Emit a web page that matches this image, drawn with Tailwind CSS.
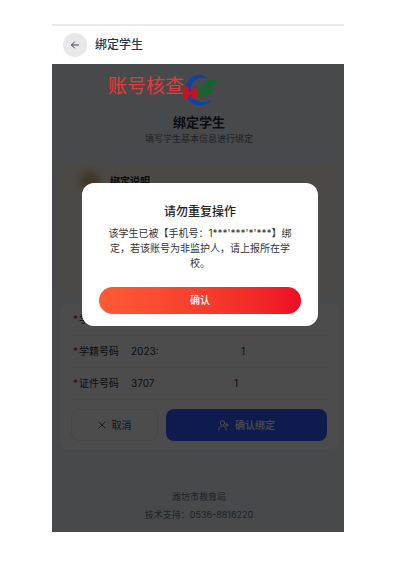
<!DOCTYPE html>
<html lang="zh-CN">
<head>
  <meta charset="UTF-8">
  <meta name="viewport" content="width=device-width, initial-scale=1.0">
  <title>绑定学生</title>
  <script src="https://cdn.jsdelivr.net/npm/@tailwindcss/browser@4"></script>
</head>
<body class="bg-white pt-6 pr-[70px] pb-[39px] pl-[52px] font-['Inter','Noto_Sans_CJK_SC',sans-serif] text-[10px] text-[#303133]">

  <header class="flex h-10 items-center gap-2 border-t-2 border-[#ebebeb] bg-white px-[11px]">
    <button type="button" aria-label="返回" class="flex size-6 items-center justify-center rounded-full bg-[#e8e8e8]">
      <svg class="size-[10px]" viewBox="0 0 10 10" fill="none" stroke="#384454" stroke-width="1" stroke-linecap="round" stroke-linejoin="round"><path d="M8.500 5H1.500M4.500 2L1.500 5l3 3"/></svg>
    </button>
    <h1 class="text-[12px] leading-5 font-medium text-[#28364a]">绑定学生</h1>
  </header>

  <main class="relative bg-[#f1f5f9] pt-[11px] pr-[6px] pb-2 pl-2">

    <section class="flex flex-col items-center">
      <!-- logo -->
      <svg class="relative z-10 h-[31px] w-[34px]" viewBox="0 0 34 31">
        <path d="M26.500 4C22 -1 14-1.500 9 3C3 8 2 16 5 22C9.500 31.500 22 34 30 24.500C24 28.500 15 28.500 11 22C7 15 8.500 7.500 14.500 4.200C18 2.300 22 2.300 26.500 4Z" fill="#0d42ab"/>
        <path d="M.5 12.500L6.500 11L7 17.500L13 11L13.500 17.500L20.500 10L14.500 23.500L9.500 23.500L9.500 18.500L5 24L1.500 24Z" fill="#c4141d"/>
        <path d="M15.500 21C16 13 22 5.500 34.500 4C33.500 9.500 30 12 24.500 13C21 14 18 17 15.500 21Z" fill="#0c6b2c"/>
        <path d="M15 24.500C18 17.500 22 14 32 13.500C28.500 18.500 25 20 21 20.300C18.500 20.800 16.500 22.500 15 24.500Z" fill="#0c6b2c"/>
      </svg>
      <h2 class="mt-[6px] text-[13px] leading-5 font-bold text-[#1e293b]">绑定学生</h2>
      <p class="text-[9px] leading-[14px] text-[#64748b]">填写学生基本信息进行绑定</p>
    </section>

    <section class="mt-[17px] h-[131px] rounded-lg bg-[#faf5ea] px-5 py-2">
      <div class="flex items-center gap-[10px]">
        <span class="size-5 rounded-full bg-[#d8b078] blur-xs"></span>
        <h3 class="leading-5 font-bold text-[#1e293b]">绑定说明</h3>
      </div>
    </section>

    <form class="mt-[10px] rounded-lg bg-white px-[11px] pb-2">
      <div class="flex h-8 items-center border-b border-[#f3f3f3] pl-[2px]">
        <span class="w-[6px] text-[#e5002d]">*</span>
        <label for="name" class="w-[52px]">学生姓名</label>
        <input id="name" type="text" class="w-[110px] outline-none">
      </div>
      <div class="flex h-8 items-center border-b border-[#f3f3f3] pl-[2px]">
        <span class="w-[6px] text-[#e5002d]">*</span>
        <label for="studentNo" class="w-[52px]">学籍号码</label>
        <input id="studentNo" type="text" value="2023:" class="w-[110px] outline-none">
        <span>1</span>
      </div>
      <div class="flex h-8 items-center border-b border-[#f3f3f3] pl-[2px]">
        <span class="w-[6px] text-[#e5002d]">*</span>
        <label for="idNo" class="w-[52px]">证件号码</label>
        <input id="idNo" type="text" value="3707" class="w-[103px] outline-none">
        <span>1</span>
      </div>
      <div class="mt-[9px] flex gap-2">
        <button type="button" class="flex h-8 w-[87px] items-center justify-center gap-[6px] rounded-lg border border-[#e9eef5] text-[#475569]">
          <svg class="size-2" viewBox="0 0 8 8" stroke="currentColor" stroke-width="1" stroke-linecap="round"><path d="M1 1l6 6M7 1L1 7"/></svg>
          取消
        </button>
        <button type="submit" class="flex h-8 flex-1 items-center justify-center gap-[6px] rounded-lg bg-[#305aff] font-medium text-white">
          <svg class="size-[11px]" viewBox="0 0 11 11" fill="none" stroke="currentColor" stroke-width="1" stroke-linecap="round" stroke-linejoin="round"><circle cx="4.500" cy="3" r="2.200"/><path d="M.6 10C.8 7.500 2.300 6 4.500 6S8 7.500 8.300 10M7.200 5h3.200M8.800 3.400v3.200"/></svg>
          确认绑定
        </button>
      </div>
    </form>

    <footer class="mt-[39px] text-center text-[9px] leading-[18px] text-[#64748b]">
      <p>潍坊市教育局</p>
      <p>技术支持：0536-8816220</p>
    </footer>

    <!-- mask and dialog -->
    <div class="absolute inset-0 bg-black/70"></div>
    <p class="absolute top-[9px] left-14 z-20 text-[19px] leading-7 text-[#e53b3b]">账号核查</p>
    <div class="absolute inset-0 z-20 pt-[119px] pr-[26px] pl-[30px]">
      <div role="dialog" aria-labelledby="dialogTitle" class="rounded-xl bg-white px-[17px] pt-[19px] pb-3 text-center">
        <h2 id="dialogTitle" class="text-[12px] leading-5 font-medium text-[#222222]">请勿重复操作</h2>
        <p class="mt-1 leading-[15px] whitespace-nowrap text-[#333333]">该学生已被【手机号：1***'***'*'***】绑<br>定，若该账号为非监护人，请上报所在学<br>校。</p>
        <button type="button" class="mt-4 h-[27px] w-full rounded-full bg-linear-to-r from-[#ff5a36] to-[#ee0a24] font-medium text-white">确认</button>
      </div>
    </div>
  </main>

</body>
</html>
